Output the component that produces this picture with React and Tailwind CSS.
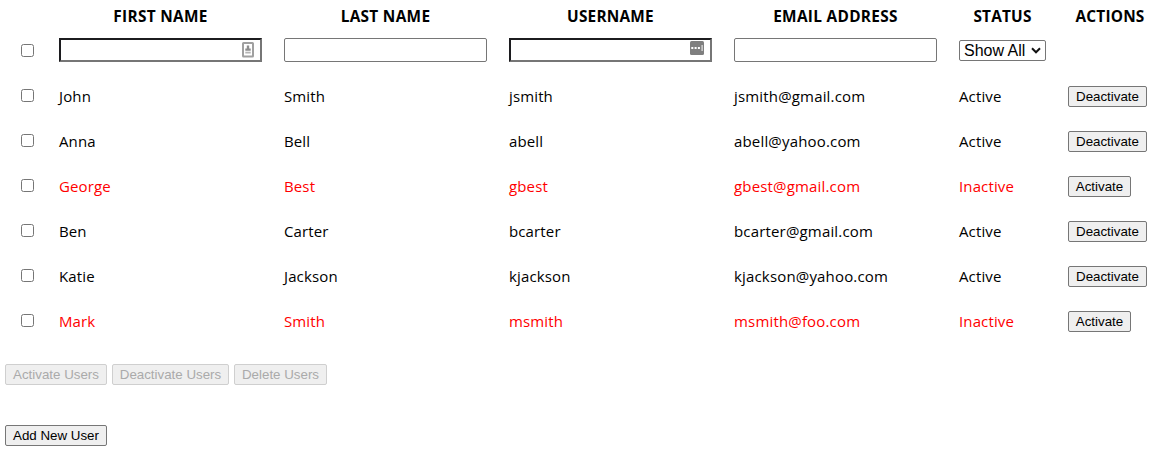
const users = [
  { first: "John", last: "Smith", username: "jsmith", email: "jsmith@gmail.com", active: true },
  { first: "Anna", last: "Bell", username: "abell", email: "abell@yahoo.com", active: true },
  { first: "George", last: "Best", username: "gbest", email: "gbest@gmail.com", active: false },
  { first: "Ben", last: "Carter", username: "bcarter", email: "bcarter@gmail.com", active: true },
  { first: "Katie", last: "Jackson", username: "kjackson", email: "kjackson@yahoo.com", active: true },
  { first: "Mark", last: "Smith", username: "msmith", email: "msmith@foo.com", active: false },
];

const ROW = "grid grid-cols-[38px_225px_225px_225px_225px_109px_84px] pl-[21px]";

function Checkbox() {
  return (
    <input
      type="checkbox"
      className="block size-[13px] appearance-none rounded-[2.5px] border border-[#767676] bg-white"
    />
  );
}

function Button({ children, className, disabled }) {
  return (
    <button
      disabled={disabled}
      className={`block h-[21px] shrink-0 rounded-[2px] border text-center font-['Liberation_Sans',Arial,sans-serif] text-[13.333px] leading-[19px] whitespace-nowrap ${
        disabled
          ? "border-[#cfcfcf] bg-[#efefef] text-[#aaaaaa]"
          : "border-[#767676] bg-[#efefef] text-black"
      } ${className}`}
    >
      {children}
    </button>
  );
}

function PlainInput() {
  return <input className="block h-6 w-[203px] rounded-[2px] border border-[#767676] bg-white px-1" />;
}

function InsetInput({ children }) {
  return (
    <div className="relative h-6 w-[203px]">
      <input className="block h-6 w-[203px] border-2 border-t-[#1c1c1f] border-r-[#767676] border-b-[#767676] border-l-[#1c1c1f] bg-white px-1" />
      {children}
    </div>
  );
}

function ContactIcon() {
  return (
    <svg className="absolute top-1 left-[183px]" width="12" height="16" viewBox="0 0 12 16">
      <rect x="1" y="1" width="10" height="13.5" rx="0.5" fill="#fff" stroke="#a0a0a0" strokeWidth="2" />
      <path d="M4.8 3.6h2.4v3h1.5v2.2H3.3V6.6h1.5z" fill="#8c8c8c" />
      <path d="M3.3 10.6h5.4" stroke="#b4b4b4" strokeWidth="1.8" />
    </svg>
  );
}

function PasswordIcon() {
  return (
    <svg className="absolute top-[3px] left-[181px]" width="14" height="14" viewBox="0 0 14 14">
      <rect width="14" height="14" rx="1.5" fill="#7f7f7f" />
      <rect x="1.3" y="6" width="2" height="2" fill="#fff" />
      <rect x="4.6" y="6" width="2" height="2" fill="#fff" />
      <rect x="7.9" y="6" width="2" height="2" fill="#fff" />
      <rect x="11.5" y="4" width="1.2" height="6" fill="#e4e4e4" />
    </svg>
  );
}

export default function App() {
  return (
    <div className="h-[457px] w-[1156px] overflow-hidden bg-white font-['Open_Sans','Noto_Sans',sans-serif] text-[15px] text-black">
      <div className={`${ROW} h-[38px] pt-1.5 text-center text-[15.4px] leading-[22px] font-bold tracking-[0.2px]`}>
        <div />
        <div className="w-[203px] tracking-[0.3px]">FIRST NAME</div>
        <div className="w-[203px] tracking-[0.3px]">LAST NAME</div>
        <div className="w-[203px]">USERNAME</div>
        <div className="w-[203px] tracking-[0.3px]">EMAIL ADDRESS</div>
        <div className="w-[87px]">STATUS</div>
        <div>ACTIONS</div>
      </div>

      <div className={`${ROW} h-9`}>
        <div className="pt-1.5"><Checkbox /></div>
        <InsetInput><ContactIcon /></InsetInput>
        <PlainInput />
        <InsetInput><PasswordIcon /></InsetInput>
        <PlainInput />
        <button className="mt-0.5 flex h-[21px] w-[87px] items-center rounded-[2px] border border-[#767676] bg-white pl-1 font-['Liberation_Sans',Arial,sans-serif] text-base leading-[19px] whitespace-nowrap">
          <span className="w-[67px] text-left">Show All</span>
          <svg width="10" height="7" viewBox="0 0 10 7" fill="none">
            <path d="M1 1.3l4 4 4-4" stroke="#111" strokeWidth="2" />
          </svg>
        </button>
      </div>

      {users.map((u) => (
        <div key={u.username} className={`${ROW} h-[45px] leading-[22px] font-normal tracking-[0.13px] ${u.active ? "text-black" : "text-[#ff0000]"}`}>
          <div className="pt-[15px]"><Checkbox /></div>
          <div className="pt-[11px]">{u.first}</div>
          <div className="pt-[11px]">{u.last}</div>
          <div className="pt-[11px]">{u.username}</div>
          <div className="pt-[11px] tracking-[0.17px]">{u.email}</div>
          <div className="pt-[11px]">{u.active ? "Active" : "Inactive"}</div>
          <div className="pt-3 tracking-normal">
            <Button className={u.active ? "w-[79px]" : "w-[63px]"}>{u.active ? "Deactivate" : "Activate"}</Button>
          </div>
        </div>
      ))}

      <div className="flex gap-[5px] pt-5 pl-[5px]">
        <Button disabled className="w-[102px]">Activate Users</Button>
        <Button disabled className="w-[117px]">Deactivate Users</Button>
        <Button disabled className="w-[93px]">Delete Users</Button>
      </div>
      <div className="pt-10 pl-[5px]">
        <Button className="w-[102px]">Add New User</Button>
      </div>
    </div>
  );
}
